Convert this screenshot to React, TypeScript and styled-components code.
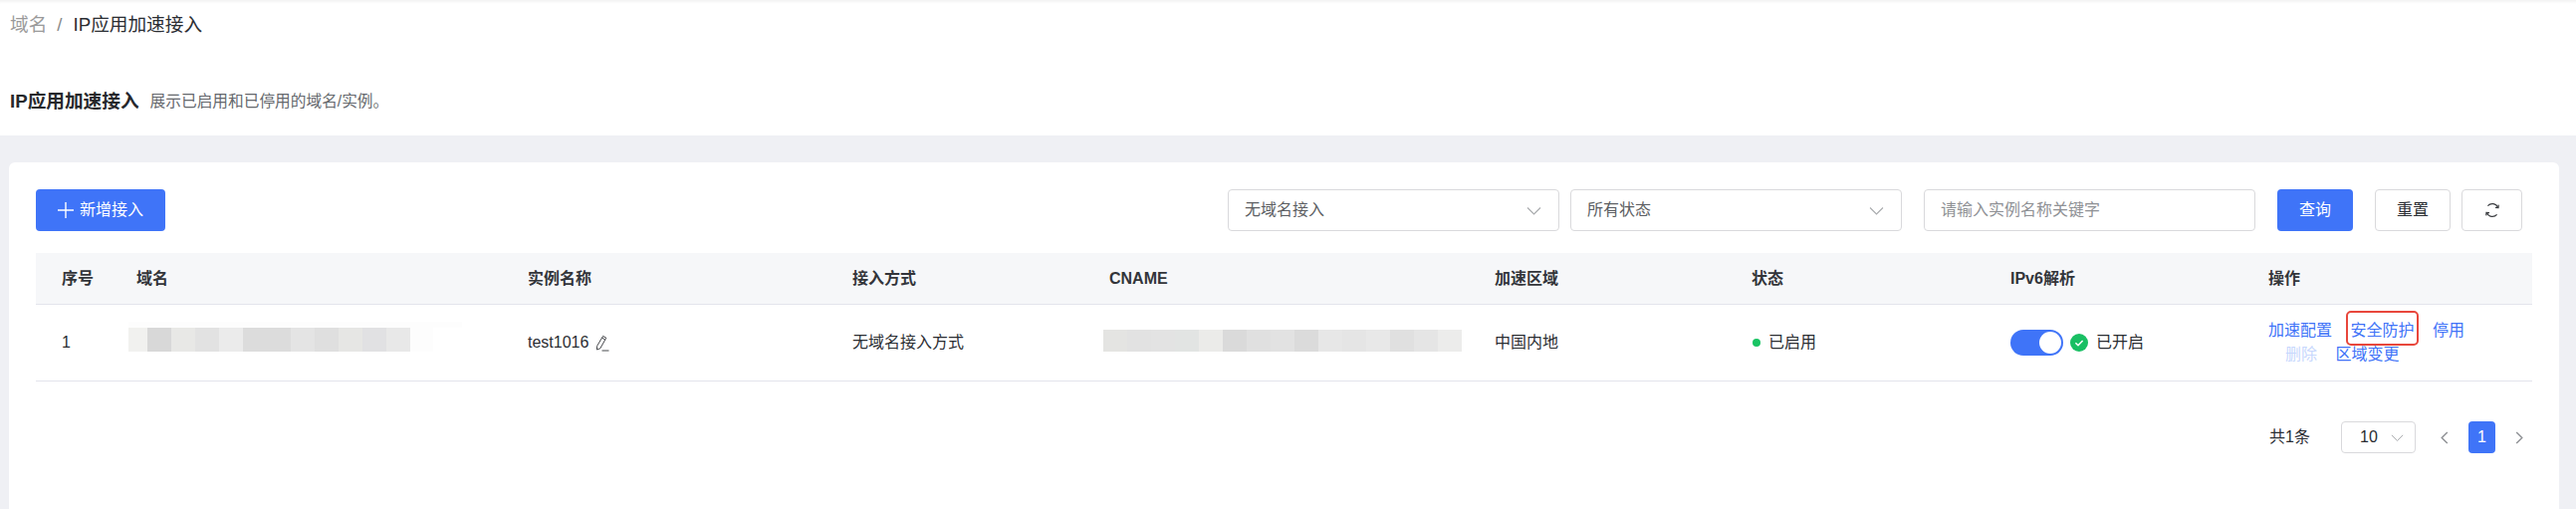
import React from 'react';
import styled, { createGlobalStyle } from 'styled-components';

const GlobalStyle = createGlobalStyle`
  html, body {
    margin: 0;
    padding: 0;
    background: #eff0f4;
    font-family: "Liberation Sans", "Noto Sans CJK SC", sans-serif;
    font-size: 16px;
    line-height: 24px;
    color: #2b2e33;
  }
  * { box-sizing: border-box; }
`;

const Page = styled.div`
  display: flex;
  flex-direction: column;
  width: 2587px;
  height: 511px;
  overflow: hidden;
`;

const Header = styled.header`
  height: 136px;
  flex: none;
  padding: 11px 10px 0;
  background: #fff;
  box-shadow: inset 0 4px 3px -2px #f3f3f3;
`;

const Breadcrumb = styled.div`
  display: flex;
  align-items: center;
  height: 28px;
  font-size: 18.67px;
  color: #2b2e33;
`;

const Crumb = styled.span`
  color: #9a9a9a;
`;

const Slash = styled.span`
  margin: 0 11px 0 10px;
  color: #8a8a8a;
`;

const TitleRow = styled.div`
  display: flex;
  align-items: center;
  height: 28px;
  margin-top: 49px;
`;

const Title = styled.h1`
  margin: 0 11px 0 0;
  font-size: 18.67px;
  font-weight: 700;
  color: #26282c;
`;

const Subtitle = styled.span`
  font-size: 15.7px;
  color: #65686d;
`;

const Card = styled.main`
  flex: 1;
  margin: 27px 17px 0 9px;
  padding: 27px 27px 0;
  background: #fff;
  border-radius: 6px 6px 0 0;
`;

const Toolbar = styled.div`
  display: flex;
  align-items: center;
  height: 42px;
  padding-right: 10px;
`;

const PrimaryButton = styled.button<{ $w: number }>`
  display: inline-flex;
  align-items: center;
  justify-content: center;
  gap: 6px;
  width: ${(p) => p.$w}px;
  height: 42px;
  padding: 0;
  border: 0;
  border-radius: 4px;
  background: #3f74f8;
  color: #fff;
  font: inherit;
`;

const Filters = styled.div`
  display: flex;
  gap: 11px;
  margin-left: auto;
`;

const SelectBox = styled.div`
  display: flex;
  align-items: center;
  justify-content: space-between;
  width: 333px;
  height: 42px;
  padding: 0 17px 0 16px;
  border: 1px solid #d9d9dc;
  border-radius: 4px;
  color: #5c5e62;
`;

const SearchInput = styled.div`
  display: flex;
  align-items: center;
  width: 333px;
  height: 42px;
  margin: 0 22px 0 22px;
  padding: 0 16px;
  border: 1px solid #d9d9dc;
  border-radius: 4px;
  color: #8f9195;
`;

const DefaultButton = styled.button<{ $w: number; $ml: number }>`
  display: inline-flex;
  align-items: center;
  justify-content: center;
  width: ${(p) => p.$w}px;
  height: 42px;
  margin-left: ${(p) => p.$ml}px;
  padding: 0;
  border: 1px solid #d9d9dc;
  border-radius: 4px;
  background: #fff;
  color: #2b2e33;
  font: inherit;
`;

const columns = '75px 393px 326px 258px 387px 258px 260px 259px 1fr';

const HeadRow = styled.div`
  display: grid;
  grid-template-columns: ${columns};
  align-items: center;
  height: 52px;
  margin-top: 22px;
  padding-left: 26px;
  background: #f6f7f9;
  border-bottom: 1px solid #e3e4ec;
  font-weight: 700;
  color: #33353a;
`;

const BodyRow = styled.div`
  display: grid;
  grid-template-columns: ${columns};
  align-items: center;
  height: 77px;
  padding-left: 26px;
  border-bottom: 1px solid #e3e4ec;
`;

const DomainBlur = styled.div`
  display: flex;
  flex-direction: column;
  margin-left: -8px;
  padding-bottom: 13px;
`;

const FaintBand = styled.span`
  width: 335px;
  height: 6px;
  background: #fdfdfd;
`;

const Mosaic = styled.div`
  display: flex;
`;

const CnameBlur = styled(Mosaic)`
  margin: 0 0 5px -6px;
`;

const MosaicCell = styled.span<{ $w: number; $h: number; $c: string }>`
  width: ${(p) => p.$w}px;
  height: ${(p) => p.$h}px;
  background: ${(p) => p.$c};
`;

const NameCell = styled.div`
  display: flex;
  align-items: center;
  gap: 6px;
`;

const StatusCell = styled.div`
  display: flex;
  align-items: center;
  gap: 8px;
`;

const Dot = styled.span`
  width: 8px;
  height: 8px;
  margin-left: 1px;
  border-radius: 50%;
  background: #19c463;
`;

const IpvCell = styled.div`
  display: flex;
  align-items: center;
`;

const Toggle = styled.span`
  position: relative;
  width: 53px;
  height: 26px;
  border-radius: 13px;
  background: #3f74f8;
`;

const Knob = styled.span`
  position: absolute;
  top: 2px;
  right: 2px;
  width: 22px;
  height: 22px;
  border-radius: 50%;
  background: #fff;
`;

const CheckBadge = styled.span`
  display: inline-flex;
  margin: 0 8px 0 7px;
`;

const ActionCell = styled.div`
  display: flex;
  flex-direction: column;
`;

const ActionLine = styled.div<{ $pl: number }>`
  display: flex;
  gap: 18.5px;
  height: 24px;
  align-items: center;
  padding-left: ${(p) => p.$pl}px;
`;

const ActionLink = styled.span<{ $disabled?: boolean }>`
  position: relative;
  color: ${(p) => (p.$disabled ? '#c7d7fd' : '#4073f8')};
`;

const Highlight = styled.span`
  position: absolute;
  top: -8px;
  left: -5px;
  right: -4px;
  bottom: -3px;
  border: 2px solid #e8473c;
  border-radius: 5px;
`;

const Pagination = styled.div`
  display: flex;
  align-items: center;
  justify-content: flex-end;
  height: 32px;
  margin-top: 40px;
  padding-right: 6px;
`;

const Total = styled.span`
  margin-right: 31px;
`;

const PageSize = styled.div`
  display: flex;
  align-items: center;
  justify-content: space-between;
  width: 75px;
  height: 32px;
  margin-right: 22px;
  padding: 0 11px 0 18px;
  border: 1px solid #d9d9dc;
  border-radius: 4px;
`;

const PageArrow = styled.span`
  display: inline-flex;
  width: 14px;
  justify-content: center;
`;

const PageNumber = styled.span`
  display: flex;
  align-items: center;
  justify-content: center;
  width: 27px;
  height: 32px;
  margin: 0 17px;
  border-radius: 4px;
  background: #3f74f8;
  color: #fff;
`;

const Chevron: React.FC<{ size?: number; dir?: 'down' | 'left' | 'right'; color?: string }> = ({
  size = 15,
  dir = 'down',
  color = '#a8aaad',
}) => {
  const d = dir === 'down' ? 'M1 4.5l6.5 6.5L14 4.5' : dir === 'left' ? 'M10.5 1.5L4.5 7.5l6 6' : 'M4.5 1.5l6 6-6 6';
  return (
    <svg width={size} height={size} viewBox="0 0 15 15" fill="none">
      <path d={d} stroke={color} strokeWidth={dir === 'down' ? 1.1 : 1.5} />
    </svg>
  );
};

const domainMosaic: [number, string][] = [
  [19, '#f1f1ef'], [24, '#d8d8d8'], [24, '#e8e8e6'], [24, '#e2e2e2'], [24, '#ebebeb'], [48, '#dcdcdc'],
  [24, '#e4e4e4'], [24, '#dfdfdf'], [24, '#e6e6e4'], [24, '#e1e1e3'], [24, '#e8e8e8'], [23, '#fdfdfd'],
];

const cnameMosaic: string[] = [
  '#e4e4e2', '#e2e2e2', '#e3e3e3', '#e2e4e3', '#ebebe9', '#dadada', '#e0e0e0', '#e2e2e2',
  '#dbdbdb', '#e7e7e7', '#e5e5e5', '#e8e8e8', '#e0e0e0', '#e5e5e5', '#ececeb',
];

const headers = ['序号', '域名', '实例名称', '接入方式', 'CNAME', '加速区域', '状态', 'IPv6解析', '操作'];

const App: React.FC = () => (
  <Page>
    <GlobalStyle />
    <Header>
      <Breadcrumb>
        <Crumb>域名</Crumb>
        <Slash>/</Slash>
        <span>IP应用加速接入</span>
      </Breadcrumb>
      <TitleRow>
        <Title>IP应用加速接入</Title>
        <Subtitle>展示已启用和已停用的域名/实例。</Subtitle>
      </TitleRow>
    </Header>
    <Card>
      <Toolbar>
        <PrimaryButton $w={130}>
          <svg width="16" height="16" viewBox="0 0 16 16" fill="none">
            <path d="M8 0v16M0 8h16" stroke="#fff" strokeWidth="1.4" />
          </svg>
          新增接入
        </PrimaryButton>
        <Filters>
          <SelectBox>
            无域名接入
            <Chevron />
          </SelectBox>
          <SelectBox>
            所有状态
            <Chevron />
          </SelectBox>
        </Filters>
        <SearchInput>请输入实例名称关键字</SearchInput>
        <PrimaryButton $w={76}>查询</PrimaryButton>
        <DefaultButton $w={76} $ml={22}>重置</DefaultButton>
        <DefaultButton $w={61} $ml={11}>
          <svg width="16" height="16" viewBox="0 0 16 16" fill="none" stroke="#3a3c40" strokeWidth="1.2">
            <path d="M13.6 5.2A6.2 6.2 0 0 0 3.4 3.6" />
            <path d="M2.4 10.8a6.2 6.2 0 0 0 10.2 1.6" />
            <path d="M11 5.4l3 .2.2-3" />
            <path d="M5 10.6l-3-.2-.2 3" />
          </svg>
        </DefaultButton>
      </Toolbar>

      <HeadRow>
        {headers.map((h) => (
          <span key={h}>{h}</span>
        ))}
      </HeadRow>
      <BodyRow>
        <span>1</span>
        <DomainBlur>
          <FaintBand />
          <Mosaic>
            {domainMosaic.map(([w, c], i) => (
              <MosaicCell key={i} $w={w} $h={24} $c={c} />
            ))}
          </Mosaic>
        </DomainBlur>
        <NameCell>
          test1016
          <svg width="15" height="17" viewBox="0 0 15 17" fill="none" stroke="#46484c" strokeWidth="1">
            <path d="M8.6 1.4l3.2 1.8-6 10.6-3.4 1.2.2-3.6z" />
            <path d="M7.6 3.2l3.2 1.8" />
            <path d="M7.5 16h7" />
          </svg>
        </NameCell>
        <span>无域名接入方式</span>
        <CnameBlur>
          {cnameMosaic.map((c, i) => (
            <MosaicCell key={i} $w={24} $h={22} $c={c} />
          ))}
        </CnameBlur>
        <span>中国内地</span>
        <StatusCell>
          <Dot />
          已启用
        </StatusCell>
        <IpvCell>
          <Toggle>
            <Knob />
          </Toggle>
          <CheckBadge>
            <svg width="18" height="18" viewBox="0 0 18 18">
              <circle cx="9" cy="9" r="9" fill="#19bf63" />
              <path d="M5.4 9.2l2.6 2.5 4.6-4.8" fill="none" stroke="#fff" strokeWidth="1.5" />
            </svg>
          </CheckBadge>
          已开启
        </IpvCell>
        <ActionCell>
          <ActionLine $pl={0}>
            <ActionLink>加速配置</ActionLink>
            <ActionLink>
              安全防护
              <Highlight />
            </ActionLink>
            <ActionLink>停用</ActionLink>
          </ActionLine>
          <ActionLine $pl={17}>
            <ActionLink $disabled>删除</ActionLink>
            <ActionLink>区域变更</ActionLink>
          </ActionLine>
        </ActionCell>
      </BodyRow>

      <Pagination>
        <Total>共1条</Total>
        <PageSize>
          10
          <Chevron size={13} />
        </PageSize>
        <PageArrow>
          <Chevron dir="left" color="#8e9094" />
        </PageArrow>
        <PageNumber>1</PageNumber>
        <PageArrow>
          <Chevron dir="right" color="#8e9094" />
        </PageArrow>
      </Pagination>
    </Card>
  </Page>
);

export default App;
